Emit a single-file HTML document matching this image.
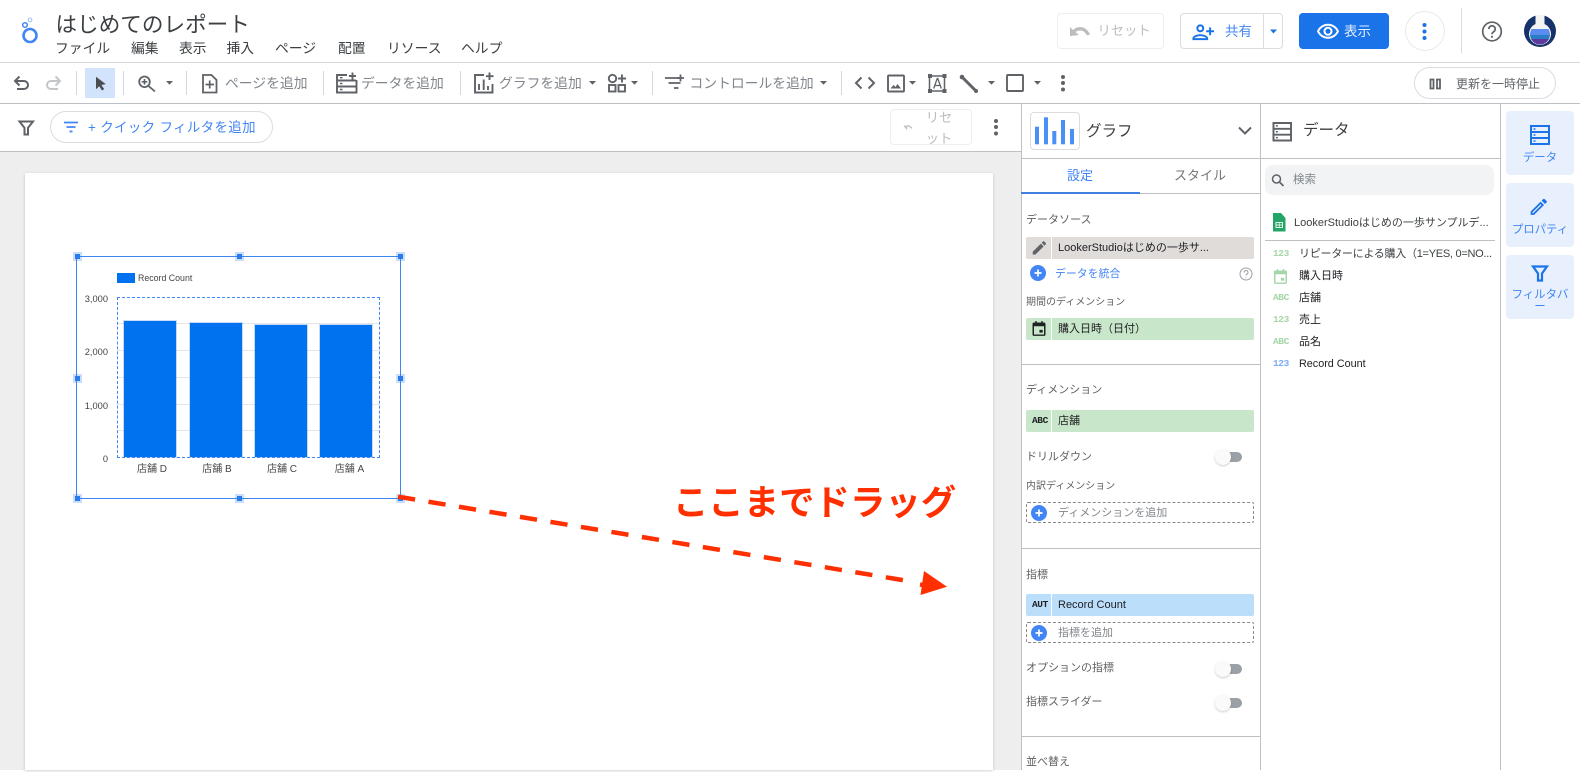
<!DOCTYPE html>
<html lang="ja"><head><meta charset="utf-8"><title>はじめてのレポート</title>
<style>
html,body{margin:0;padding:0;background:#fff}
body{width:1580px;height:770px;position:relative;overflow:hidden;font-family:"Liberation Sans","Noto Sans CJK JP",sans-serif;color:#3c4043}
div{position:absolute;box-sizing:border-box}
.t{white-space:nowrap;line-height:20px;height:20px}
.m{font-size:13.8px;top:39px;color:#3c4043}
.b{font-size:13.8px;top:74px;color:#80868b}
.l{font-size:11px;left:1026px;color:#616161}
.s{font-size:10px;left:1026px;color:#616161}
.c{font-size:11px;left:1058px;color:#202124}
.a{font-size:11px;left:1058px;color:#80868b}
.r{font-size:11px;left:1299px;color:#202124}
.v{font-size:9.300px;color:#444;text-align:right;width:40px;left:68px}
.x{font-size:10px;color:#444;text-align:center;width:60px;top:459.500px}
.chip{left:1026px;width:228px;height:22px;border-radius:2px}
.sep{left:1051px;width:1px;height:22px;background:#fff}
.dash{left:1026px;width:228px;height:21px;border:1px dashed #8a8a8a;border-radius:2px}
.line{background:#bdc1c6;height:1px}
.vl{background:#d5d7da;width:1px;top:71px;height:24px}
.tg{left:1226px;width:16px;height:10px;border-radius:5px;background:#9aa0a6}
.th{left:1215px;width:16px;height:16px;border-radius:50%;background:#fafafa;box-shadow:0 1px 2px rgba(0,0,0,.2)}
.rail{left:1506px;width:68px;height:64px;background:#e8f0fe;border-radius:4px}
.rt{font-size:11.4px;color:#4285f4;left:1506px;width:68px;text-align:center}
.h{width:5px;height:5px;background:#2a7de9;box-shadow:0 0 0 2px rgba(66,133,244,.28)}
.bar{background:#0072f0;width:52px;box-shadow:0 0 0 1px rgba(66,133,244,.3)}
.g{left:117px;width:263px;height:1px;background:#e6e6e6}
.ty{font-family:"Liberation Mono",monospace;font-weight:bold;font-size:9.500px;letter-spacing:-.4px;line-height:20px}
</style></head><body>

<!-- canvas -->
<div style="left:0;top:152px;width:1021px;height:618px;background:#eee"></div>
<div style="left:25px;top:173px;width:968px;height:597px;background:#fff;box-shadow:0 1px 3px rgba(0,0,0,.18)"></div>

<!-- structural lines -->
<div class="line" style="left:0;top:62px;width:1580px;background:#d5d7da"></div>
<div class="line" style="left:0;top:103px;width:1580px"></div>
<div class="line" style="left:0;top:151px;width:1021px"></div>
<div class="line" style="left:1021px;top:103px;width:1px;height:667px"></div>
<div class="line" style="left:1260px;top:103px;width:1px;height:667px"></div>
<div class="line" style="left:1500px;top:103px;width:1px;height:667px"></div>
<div class="line" style="left:1021px;top:158px;width:479px"></div>
<div class="line" style="left:1021px;top:193px;width:239px"></div>
<div style="left:1021px;top:192px;width:119px;height:2px;background:#3f7fe0"></div>
<div class="line" style="left:1021px;top:364px;width:239px"></div>
<div class="line" style="left:1021px;top:548px;width:239px"></div>
<div class="line" style="left:1021px;top:736px;width:239px"></div>
<div class="line" style="left:1265px;top:240px;width:230px"></div>
<div class="line" style="left:1461px;top:8px;width:1px;height:45px;background:#dadce0"></div>

<!-- header text -->
<div class="t" style="left:55.500px;top:15px;font-size:21.600px;color:#3c4043">はじめてのレポート</div>
<div class="t m" style="left:55px">ファイル</div>
<div class="t m" style="left:131px">編集</div>
<div class="t m" style="left:179px">表示</div>
<div class="t m" style="left:226.500px">挿入</div>
<div class="t m" style="left:275px">ページ</div>
<div class="t m" style="left:338px">配置</div>
<div class="t m" style="left:387px">リソース</div>
<div class="t m" style="left:461px">ヘルプ</div>

<!-- top-right buttons -->
<div style="left:1057px;top:13px;width:107px;height:36px;border:1px solid #eeeeee;border-radius:4px"></div>
<div class="t" style="left:1097.500px;top:21px;font-size:13.300px;color:#bdbdbd">リセット</div>
<div style="left:1180px;top:13px;width:103px;height:36px;border:1px solid #dadce0;border-radius:4px"></div>
<div style="left:1263px;top:13px;width:1px;height:36px;background:#dadce0"></div>
<div class="t" style="left:1225px;top:21.500px;font-size:13.500px;color:#4285f4">共有</div>
<div style="left:1299px;top:13px;width:90px;height:36px;background:#1a73e8;border-radius:4px"></div>
<div class="t" style="left:1344px;top:21.500px;font-size:13.500px;color:#e3eeff">表示</div>
<div style="left:1405px;top:11px;width:40px;height:40px;border:1.500px solid #e8eaed;border-radius:50%"></div>

<!-- toolbar -->
<div style="left:85px;top:68px;width:30px;height:30px;background:#d2e3fc"></div>
<div class="vl" style="left:76px"></div><div class="vl" style="left:123px"></div><div class="vl" style="left:186px"></div>
<div class="vl" style="left:323px"></div><div class="vl" style="left:460px"></div><div class="vl" style="left:652px"></div><div class="vl" style="left:841px"></div>
<div class="t b" style="left:225px">ページを追加</div>
<div class="t b" style="left:361px">データを追加</div>
<div class="t b" style="left:499px">グラフを追加</div>
<div class="t b" style="left:689.500px">コントロールを追加</div>
<div style="left:1414px;top:67px;width:142px;height:32px;border:1px solid #dadce0;border-radius:16px"></div>
<div class="t" style="left:1456px;top:74px;font-size:12px;color:#5f6368">更新を一時停止</div>

<!-- filter bar -->
<div style="left:50px;top:111px;width:223px;height:32px;border:1px solid #dadce0;border-radius:16px"></div>
<div class="t" style="left:88px;top:118px;font-size:13.400px;letter-spacing:.4px;color:#4285f4">+ クイック フィルタを追加</div>
<div style="left:890px;top:109px;width:82px;height:36px;border:1px solid #eee;border-radius:4px"></div>
<div style="left:918px;top:107px;width:42px;font-size:13.300px;line-height:21px;color:#bdbdbd;text-align:center">リセ<br>ット</div>

<!-- chart -->
<div style="left:117px;top:273px;width:18px;height:10px;background:#0072f0"></div>
<div class="t" style="left:138px;top:268px;font-size:8.800px;color:#444">Record Count</div>
<div class="g" style="top:323px"></div><div class="g" style="top:350px"></div><div class="g" style="top:377px"></div><div class="g" style="top:404px"></div><div class="g" style="top:430px"></div>
<div class="bar" style="left:124px;top:321px;height:136px"></div>
<div class="bar" style="left:190px;top:323px;height:134px"></div>
<div class="bar" style="left:255px;top:325px;height:132px"></div>
<div class="bar" style="left:320px;top:325px;height:132px"></div>
<div style="left:117px;top:297px;width:263px;height:161px;border:1px dashed #4285f4"></div>
<div class="t v" style="top:288.500px">3,000</div><div class="t v" style="top:341.500px">2,000</div><div class="t v" style="top:395.500px">1,000</div><div class="t v" style="top:448.500px">0</div>
<div class="t x" style="left:122px">店舗 D</div><div class="t x" style="left:187px">店舗 B</div><div class="t x" style="left:252px">店舗 C</div><div class="t x" style="left:319.500px">店舗 A</div>
<div style="left:76px;top:256px;width:325px;height:243px;border:1px solid #3d86f0"></div>
<div class="h" style="left:74.500px;top:254px"></div><div class="h" style="left:236.500px;top:254px"></div><div class="h" style="left:398px;top:254px"></div>
<div class="h" style="left:74.500px;top:375.500px"></div><div class="h" style="left:398px;top:375.500px"></div>
<div class="h" style="left:74.500px;top:496px"></div><div class="h" style="left:236.500px;top:496px"></div><div class="h" style="left:398px;top:496px"></div>

<!-- annotation -->
<div class="t" style="left:673px;top:483px;height:40px;line-height:40px;font-size:35.400px;font-weight:700;color:#ff2f00">ここまでドラッグ</div>

<!-- panel 1 -->
<div style="left:1030px;top:112px;width:50px;height:38px;border:1px solid #dadce0;border-radius:4px"></div>
<div class="t" style="left:1086px;top:121.500px;font-size:15.500px;color:#3c4043">グラフ</div>
<div class="t" style="left:1060px;top:166px;width:40px;text-align:center;font-size:13px;color:#4285f4">設定</div>
<div class="t" style="left:1170px;top:166px;width:60px;text-align:center;font-size:13px;color:#757575">スタイル</div>
<div class="t l" style="top:210px">データソース</div>
<div class="chip" style="top:237px;background:#e0dcda"></div><div class="sep" style="top:237px"></div>
<div class="t c" style="top:238px">LookerStudioはじめの一歩サ...</div>
<div class="t" style="left:1055px;top:264px;font-size:10.900px;color:#4285f4">データを統合</div>
<div class="t s" style="top:292.500px">期間のディメンション</div>
<div class="chip" style="top:318px;background:#c8e6c9"></div><div class="sep" style="top:318px"></div>
<div class="t c" style="top:319px">購入日時（日付）</div>
<div class="t l" style="top:380px">ディメンション</div>
<div class="chip" style="top:410px;background:#c8e6c9"></div><div class="sep" style="top:410px"></div>
<div class="t ty" style="left:1032px;top:411px;color:#202124">ABC</div>
<div class="t c" style="top:411px">店舗</div>
<div class="t l" style="top:447px">ドリルダウン</div>
<div class="tg" style="top:452px"></div><div class="th" style="top:449px"></div>
<div class="t s" style="top:476.500px">内訳ディメンション</div>
<div class="dash" style="top:502px"></div>
<div class="t a" style="top:503px">ディメンションを追加</div>
<div class="t l" style="top:564.500px">指標</div>
<div class="chip" style="top:594px;background:#bbdefb"></div><div class="sep" style="top:594px"></div>
<div class="t ty" style="left:1032px;top:595px;color:#202124">AUT</div>
<div class="t c" style="top:595px">Record Count</div>
<div class="dash" style="top:622px"></div>
<div class="t a" style="top:623px">指標を追加</div>
<div class="t l" style="top:658px">オプションの指標</div>
<div class="tg" style="top:664px"></div><div class="th" style="top:661px"></div>
<div class="t l" style="top:692px">指標スライダー</div>
<div class="tg" style="top:698px"></div><div class="th" style="top:695px"></div>
<div class="t l" style="top:752px">並べ替え</div>

<!-- panel 2 -->
<div class="t" style="left:1303px;top:121px;font-size:15.500px;color:#3c4043">データ</div>
<div style="left:1265px;top:165px;width:229px;height:30px;background:#f1f3f4;border-radius:8px"></div>
<div class="t" style="left:1293px;top:170px;font-size:11.500px;color:#80868b">検索</div>
<div class="t" style="left:1294px;top:213px;font-size:11px;color:#3c4043">LookerStudioはじめの一歩サンプルデ...</div>
<div class="t r" style="top:243.500px;color:#3c4043;letter-spacing:-.27px">リピーターによる購入（1=YES, 0=NO...</div>
<div class="t r" style="top:265.500px">購入日時</div>
<div class="t r" style="top:287.500px">店舗</div>
<div class="t r" style="top:309.500px">売上</div>
<div class="t r" style="top:331.500px">品名</div>
<div class="t r" style="top:353.500px;font-size:10.800px">Record Count</div>
<div class="t ty" style="left:1273px;top:243.500px;color:#a5d6a7">123</div>
<div class="t ty" style="left:1273px;top:287.500px;color:#a5d6a7">ABC</div>
<div class="t ty" style="left:1273px;top:309.500px;color:#a5d6a7">123</div>
<div class="t ty" style="left:1273px;top:331.500px;color:#a5d6a7">ABC</div>
<div class="t ty" style="left:1273px;top:353.500px;color:#7baaf7">123</div>

<!-- rail -->
<div class="rail" style="top:111px"></div><div class="rail" style="top:183px"></div><div class="rail" style="top:255px"></div>
<div class="t rt" style="top:148px">データ</div>
<div class="t rt" style="top:219.500px">プロパティ</div>
<div class="rt" style="top:290px;line-height:11.500px">フィルタバ<br>ー</div>

<!-- icons -->
<svg width="1580" height="770" viewBox="0 0 1580 770" style="position:absolute;left:0;top:0;pointer-events:none" xmlns="http://www.w3.org/2000/svg">
<defs>
<symbol id="db" viewBox="0 0 20 20"><path fill="currentColor" fill-rule="evenodd" d="M0 0h20v20H0zM2 2v4h16V2zM2 8v4h16V8zM2 14v4h16v-4z"/><path fill="currentColor" d="M3.500 3.200h2v1.600h-2zM3.500 9.200h2v1.600h-2zM3.500 15.200h2v1.600h-2z"/></symbol>
<symbol id="pl" viewBox="0 0 16 16"><circle cx="8" cy="8" r="8" fill="#4285f4"/><path d="M8 4.500v7M4.500 8h7" stroke="#fff" stroke-width="1.700"/></symbol>
<symbol id="cal" viewBox="0 0 14 16"><path fill="currentColor" fill-rule="evenodd" d="M3 0h1.600v1.600h4.800V0H11v1.600h1.400c.9 0 1.600.7 1.600 1.600v11.200c0 .9-.7 1.600-1.600 1.600H1.600c-.9 0-1.600-.7-1.600-1.600V3.200c0-.9.7-1.600 1.600-1.600H3zM1.600 5.600v8.800h10.800V5.600zM7.500 9.500h3.500v3H7.500z"/></symbol>
</defs>

<!-- logo -->
<circle cx="30" cy="35.500" r="6.500" fill="none" stroke="#4285f4" stroke-width="2.600"/>
<circle cx="25" cy="25" r="2.300" fill="none" stroke="#4285f4" stroke-width="1.500"/>
<circle cx="30" cy="20" r="1.800" fill="none" stroke="#a8c7fa" stroke-width="1.200"/>

<!-- undo / redo -->
<path d="M19.500 76.500L15 81l4.500 4.500M15 81h9a4 4 0 0 1 0 8h-7" fill="none" stroke="#5f6368" stroke-width="2"/>
<path d="M55.500 76.500L60 81l-4.500 4.500M60 81h-9a4 4 0 0 0 0 8h7" fill="none" stroke="#c4c7ca" stroke-width="2"/>

<!-- cursor -->
<path d="M96 76.800v12.500l3.200-3 2.800 4.200 2.200-1.400-2.800-4.100 4.400-.9z" fill="#4a4d50"/>

<!-- zoom -->
<circle cx="144.500" cy="81.800" r="5.300" fill="none" stroke="#5f6368" stroke-width="1.800"/>
<path d="M148.500 86l6.500 5.500" stroke="#5f6368" stroke-width="1.800"/><path d="M144.500 79v5.600M141.700 81.800h5.600" stroke="#5f6368" stroke-width="1.600"/>
<path d="M166 81h7l-3.500 3.800z" fill="#5f6368"/>

<!-- page add -->
<path d="M203 75h8.500l5 5v12.500h-13.500z" fill="none" stroke="#5f6368" stroke-width="1.800"/><path d="M209.700 80.500v8M205.500 84.500h8.500" stroke="#5f6368" stroke-width="1.700"/>

<!-- data add -->
<path d="M347 75h-10v17.500h19.500V80" fill="none" stroke="#5f6368" stroke-width="1.900"/><path d="M337 80.500h19M337 86.500h19" stroke="#5f6368" stroke-width="1.900"/><path d="M340 77.700h2.500M340 83.500h2.500M340 89.500h2.500" stroke="#5f6368" stroke-width="1.400"/><path d="M352.500 72.500v7M349 76h7" stroke="#5f6368" stroke-width="1.900"/>

<!-- chart add -->
<path d="M484 75h-9v17.500h17.500V84" fill="none" stroke="#5f6368" stroke-width="1.900"/><path d="M479 84v6M483.700 79.500v10.500M488 86v4" stroke="#5f6368" stroke-width="1.900"/><path d="M489.500 72.500v7.500M486 76.200h7.500" stroke="#5f6368" stroke-width="1.900"/>
<path d="M589 81h7l-3.500 3.800z" fill="#5f6368"/>

<!-- combo -->
<circle cx="612.500" cy="78.500" r="3.700" fill="none" stroke="#5f6368" stroke-width="1.900"/><path d="M622 74.500v8M618 78.500h8" stroke="#5f6368" stroke-width="1.900"/>
<rect x="609" y="85" width="6.500" height="6.500" fill="none" stroke="#5f6368" stroke-width="1.900"/><rect x="618.500" y="85" width="6.500" height="6.500" fill="none" stroke="#5f6368" stroke-width="1.900"/>
<path d="M631 81h7l-3.500 3.800z" fill="#5f6368"/>

<!-- control add -->
<path d="M665 78h15.500M668.500 83h12M674 88h4.500" stroke="#5f6368" stroke-width="1.800"/><path d="M680.500 74.500v7M677 78h7" stroke="#5f6368" stroke-width="1.800"/>
<path d="M820 81h7l-3.500 3.800z" fill="#5f6368"/>

<!-- code -->
<path d="M861.500 77.500l-5.500 5.500 5.500 5.500M868.500 77.500l5.500 5.500-5.500 5.500" fill="none" stroke="#5f6368" stroke-width="2"/>

<!-- image -->
<rect x="888" y="75.500" width="16" height="16" rx="1" fill="none" stroke="#5f6368" stroke-width="1.900"/><path d="M890.500 88.500l3-3.500 2 2 2-3 3.500 4.500z" fill="#5f6368"/>
<path d="M909 81h7l-3.500 3.800z" fill="#5f6368"/>

<!-- text box -->
<rect x="929.500" y="76" width="15" height="15" fill="none" stroke="#5f6368" stroke-width="1.500"/>
<path d="M928 74h4v4h-4zM942.500 74h4v4h-4zM928 89h4v4h-4zM942.500 89h4v4h-4z" fill="#5f6368"/>
<path d="M933.700 88.500l3.500-10h.6l3.500 10M935 85.500h5" fill="none" stroke="#5f6368" stroke-width="1.300"/>

<!-- line -->
<path d="M962 77l14 14" stroke="#5f6368" stroke-width="3"/><circle cx="962" cy="77" r="2.300" fill="#5f6368"/><circle cx="976" cy="91" r="2" fill="#5f6368"/>
<path d="M988 81h7l-3.500 3.800z" fill="#5f6368"/>

<!-- rect -->
<rect x="1007" y="75" width="16" height="16" rx="1" fill="none" stroke="#5f6368" stroke-width="1.900"/>
<path d="M1034 81h7l-3.500 3.800z" fill="#5f6368"/>

<!-- dots -->
<g fill="#5f6368"><circle cx="1063" cy="77" r="2"/><circle cx="1063" cy="83" r="2"/><circle cx="1063" cy="89.500" r="2"/>
<circle cx="996" cy="121" r="2"/><circle cx="996" cy="127" r="2"/><circle cx="996" cy="133.500" r="2"/></g>

<!-- pause -->
<path fill="none" stroke="#5f6368" stroke-width="1.800" d="M1430.500 79.500h3v9h-3zM1437 79.500h3v9h-3z"/>

<!-- top reset -->
<path d="M1070 36v-9l3 3c2-2 4.500-3 7-3 4.500 0 8 3 10 7.500l-3 1c-1.500-3-4-5-7-5-1.500 0-3 .5-4.500 1.500L1079 35z" fill="#bdbdbd"/>

<!-- person add -->
<g transform="translate(1215,20.500) scale(-.98,.98)"><path fill="#1a73e8" d="M15 12c2.210 0 4-1.790 4-4s-1.790-4-4-4-4 1.790-4 4 1.790 4 4 4zm0-6c1.100 0 2 .9 2 2s-.9 2-2 2-2-.9-2-2 .9-2 2-2zm0 8c-2.670 0-8 1.340-8 4v2h16v-2c0-2.660-5.330-4-8-4zm-6 4c.22-.72 3.310-2 6-2 2.700 0 5.800 1.290 6 2H9zm-3-3v-3h3v-2H6V7H4v3H1v2h3v3h2z"/></g>
<path d="M1270 29.500h7l-3.500 4z" fill="#1a73e8"/>

<!-- eye -->
<g transform="translate(1316,19.800)"><path fill="#fff" d="M12 6c3.790 0 7.170 2.130 8.820 5.500C19.170 14.870 15.790 17 12 17s-7.170-2.130-8.820-5.500C4.830 8.130 8.210 6 12 6m0-2C7 4 2.730 7.110 1 11.500 2.730 15.890 7 19 12 19s9.270-3.110 11-7.500C21.270 7.110 17 4 12 4zm0 5c1.380 0 2.500 1.120 2.500 2.500S13.380 14 12 14s-2.500-1.120-2.500-2.500S10.620 9 12 9m0-2c-2.480 0-4.500 2.020-4.500 4.500S9.520 16 12 16s4.500-2.020 4.500-4.500S14.480 7 12 7z"/></g>

<!-- kebab -->
<g fill="#1a73e8"><circle cx="1424.500" cy="25" r="2"/><circle cx="1424.500" cy="31.500" r="2"/><circle cx="1424.500" cy="38" r="2"/></g>

<!-- help -->
<circle cx="1492" cy="31.500" r="9.300" fill="none" stroke="#5f6368" stroke-width="1.700"/>
<path d="M1488.800 29a3.200 3.200 0 1 1 4.800 2.800c-1 .6-1.600 1.200-1.600 2.400" fill="none" stroke="#5f6368" stroke-width="1.700"/><circle cx="1492" cy="36.800" r="1.100" fill="#5f6368"/>

<!-- avatar -->
<circle cx="1540" cy="31" r="16" fill="#17326b"/>
<path d="M1535.500 15h9v9a11 11 0 1 1-9 0z" fill="#f4f4f4"/>
<clipPath id="fl"><circle cx="1540" cy="34.500" r="10"/></clipPath>
<g clip-path="url(#fl)"><rect x="1528" y="29" width="24" height="6" fill="#5b8def"/><rect x="1528" y="35" width="24" height="4" fill="#2a7cc7"/><rect x="1528" y="39" width="24" height="7" fill="#5b3b9e"/></g>

<!-- filter -->
<path d="M19.500 121.500h13.500l-5 6.300v6.700h-3.500v-6.700z" fill="none" stroke="#5f6368" stroke-width="2"/>
<path d="M64 122.500h14M66.500 127h9M69.500 131.500h3" stroke="#4285f4" stroke-width="1.700"/>

<!-- small reset -->
<path d="M904 125.500l2.500 3V126c2-.5 4 .5 5.500 2.500" fill="none" stroke="#bdbdbd" stroke-width="1.300"/>

<!-- graph icon -->
<g fill="#4a8ff5"><rect x="1035" y="126.700" width="4" height="17.600"/><rect x="1044" y="117.300" width="4" height="27"/><rect x="1052.300" y="131" width="4" height="13.300"/><rect x="1061" y="120" width="4" height="24.300"/><rect x="1070" y="129" width="4" height="15.300"/></g>
<path d="M1239 127.500l6 6 6-6" fill="none" stroke="#5f6368" stroke-width="2"/>

<!-- data header -->
<use href="#db" x="1272.500" y="122" width="19.500" height="19.500" color="#5f6368"/>

<!-- panel1 icons -->
<g transform="translate(1030.500,239) scale(.74)"><path fill="#5f6368" d="M3 17.250V21h3.750L17.810 9.940l-3.750-3.750L3 17.250zM20.710 7.040c.39-.39.39-1.020 0-1.410l-2.340-2.340c-.39-.39-1.020-.39-1.410 0l-1.830 1.830 3.750 3.750 1.830-1.830z"/></g>
<use href="#pl" x="1030" y="265" width="16" height="16"/>
<circle cx="1246" cy="274" r="6" fill="none" stroke="#9aa0a6" stroke-width="1"/>
<path d="M1244.200 272.500a1.900 1.900 0 1 1 2.800 1.600c-.6.400-1 .7-1 1.400M1246 277v.8" fill="none" stroke="#9aa0a6" stroke-width="1"/>
<use href="#cal" x="1032.500" y="321" width="13" height="15" color="#202124"/>
<use href="#pl" x="1031" y="505" width="16" height="16"/>
<use href="#pl" x="1031" y="625" width="16" height="16"/>

<!-- panel2 icons -->
<circle cx="1276.500" cy="179" r="4" fill="none" stroke="#5f6368" stroke-width="1.500"/><path d="M1279.500 182l4 4" stroke="#5f6368" stroke-width="1.700"/>
<path d="M1273 213h8l4.500 5v13.500h-12.500z" fill="#23a566"/><rect x="1276" y="222.500" width="6.500" height="5" fill="none" stroke="#fff" stroke-width=".9"/><path d="M1279.200 222.500v5M1276 225h6.500" stroke="#fff" stroke-width=".7"/>
<use href="#cal" x="1274" y="269" width="13" height="15" color="#a5d6a7"/>

<!-- rail icons -->
<use href="#db" x="1530" y="125" width="20" height="20" color="#1a73e8"/>
<g transform="translate(1528,196) scale(.9)"><path fill="#1a73e8" d="M3 17.250V21h3.750L17.810 9.940l-3.750-3.750L3 17.250zM5.920 19H5v-.92l9.060-9.060.92.920L5.920 19zM20.710 5.630l-2.340-2.340c-.2-.2-.45-.29-.71-.29s-.51.1-.7.290l-1.830 1.830 3.750 3.750 1.830-1.830c.39-.39.39-1.020 0-1.410z"/></g>
<path d="M1533 266.500h14l-5 7v7h-4v-7z" fill="none" stroke="#1a73e8" stroke-width="2.200"/>

<!-- arrow -->
<path d="M398 496.700L904 580.300" fill="none" stroke="#ff2f00" stroke-width="4.500" stroke-dasharray="17.300 13.600"/>
<path d="M924 571l23 15.700-26.500 8.300z" fill="#ff2f00"/>
<path d="M920 584.500l5 .8" stroke="#ff2f00" stroke-width="4.500"/>
</svg>
</body></html>
